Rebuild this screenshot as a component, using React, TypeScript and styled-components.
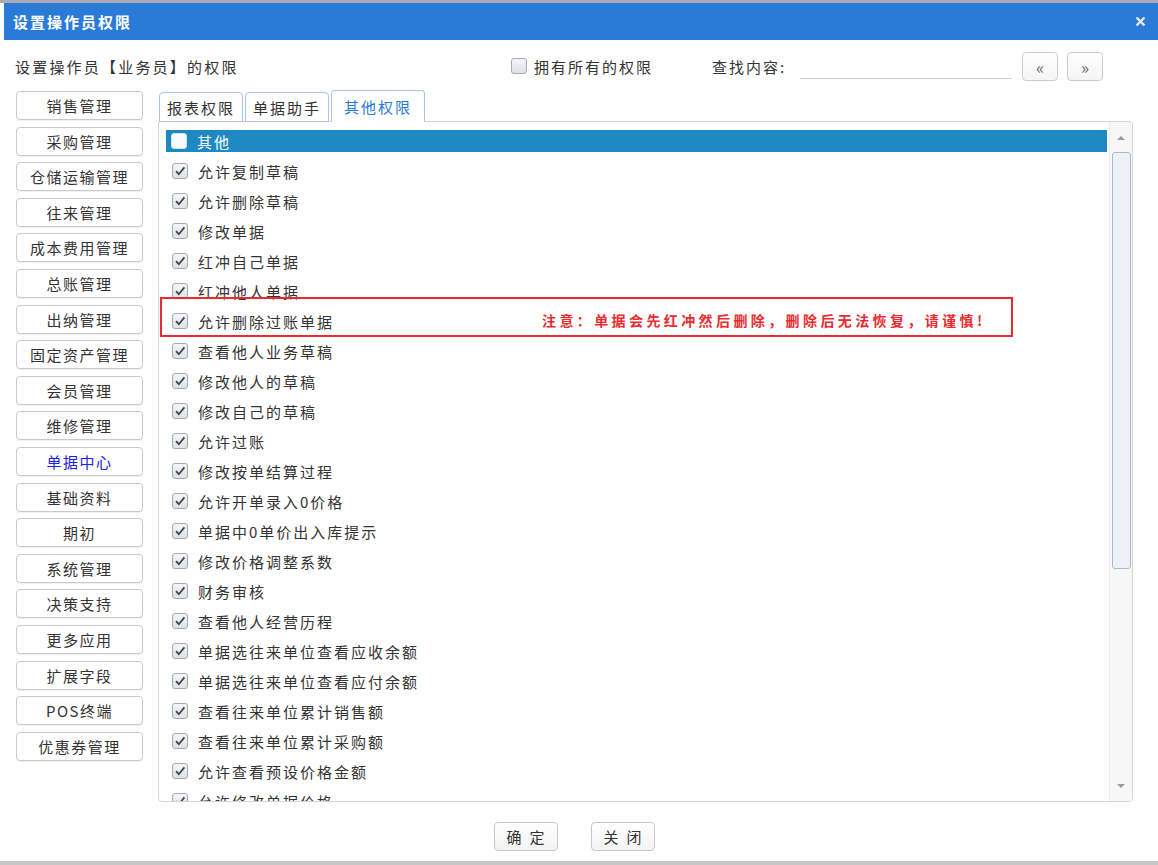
import styled, { createGlobalStyle } from 'styled-components';

const GlobalStyle = createGlobalStyle`
  html, body {
    margin: 0;
    padding: 0;
    background: #ffffff;
  }
  body {
    font-family: 'Noto Sans CJK SC', 'Noto Sans', sans-serif;
    color: #333333;
  }
`;

const modules = [
  '销售管理',
  '采购管理',
  '仓储运输管理',
  '往来管理',
  '成本费用管理',
  '总账管理',
  '出纳管理',
  '固定资产管理',
  '会员管理',
  '维修管理',
  '单据中心',
  '基础资料',
  '期初',
  '系统管理',
  '决策支持',
  '更多应用',
  '扩展字段',
  'POS终端',
  '优惠券管理',
];

const permissions = [
  '允许复制草稿',
  '允许删除草稿',
  '修改单据',
  '红冲自己单据',
  '红冲他人单据',
  '允许删除过账单据',
  '查看他人业务草稿',
  '修改他人的草稿',
  '修改自己的草稿',
  '允许过账',
  '修改按单结算过程',
  '允许开单录入0价格',
  '单据中0单价出入库提示',
  '修改价格调整系数',
  '财务审核',
  '查看他人经营历程',
  '单据选往来单位查看应收余额',
  '单据选往来单位查看应付余额',
  '查看往来单位累计销售额',
  '查看往来单位累计采购额',
  '允许查看预设价格金额',
  '允许修改单据价格',
];

const TopStrip = styled.div`
  height: 3px;
  background: #a9adb3;
`;

const Dialog = styled.div`
  margin-left: 4px;
  display: flex;
  flex-direction: column;
  height: 858px;
`;

const TitleBar = styled.div`
  height: 37px;
  background: #2a7bd8;
  display: flex;
  align-items: center;
  justify-content: space-between;
  padding: 0 12px 0 9px;
`;

const Title = styled.div`
  color: #ffffff;
  font-size: 15px;
  font-weight: bold;
  letter-spacing: 2px;
`;

const CloseButton = styled.div`
  width: 12px;
  height: 12px;
  display: flex;
  align-items: center;
  justify-content: center;
`;

const Toolbar = styled.div`
  height: 48px;
  display: flex;
  align-items: center;
  padding: 2px 0 0 11px;
`;

const Caption = styled.div`
  font-size: 15px;
  letter-spacing: 2.2px;
  color: #333333;
  width: 496px;
`;

const AllLabel = styled.label`
  display: flex;
  align-items: center;
  gap: 7px;
  font-size: 15px;
  letter-spacing: 2px;
  color: #333333;
  width: 201px;
`;

const SearchLabel = styled.span`
  font-size: 15px;
  letter-spacing: 2px;
  color: #333333;
  width: 88px;
`;

const SearchInput = styled.div`
  width: 212px;
  height: 24px;
  border-bottom: 1px solid #cfcfcf;
  margin-right: 10px;
`;

const NavButton = styled.div`
  width: 34px;
  height: 27px;
  border: 1px solid #cccccc;
  border-radius: 4px;
  background: linear-gradient(#ffffff, #f4f4f4);
  display: flex;
  align-items: center;
  justify-content: center;
  font-size: 17px;
  color: #666666;
  margin-right: 9px;
`;

const Main = styled.div`
  display: flex;
  gap: 15px;
  padding-left: 12px;
  height: 712px;
`;

const ModuleList = styled.div`
  width: 127px;
  display: flex;
  flex-direction: column;
  gap: 6.6px;
  padding-top: 1px;
`;

const ModuleButton = styled.div<{ $active?: boolean }>`
  height: 27px;
  border: 1px solid #c9c9c9;
  border-radius: 4px;
  background: #ffffff;
  box-shadow: 0 1px 1px rgba(0, 0, 0, 0.06);
  display: flex;
  align-items: center;
  justify-content: center;
  font-size: 15px;
  letter-spacing: 1.5px;
  color: ${(p) => (p.$active ? '#2020ee' : '#333333')};
  white-space: nowrap;
`;

const TabArea = styled.div`
  width: 975px;
  display: flex;
  flex-direction: column;
`;

const Tabs = styled.div`
  display: flex;
  align-items: flex-end;
  height: 32px;
  padding-left: 1px;
  gap: 2px;
  position: relative;
  z-index: 1;
  margin-bottom: -1px;
`;

const Tab = styled.div<{ $active?: boolean }>`
  height: ${(p) => (p.$active ? '32px' : '30px')};
  box-sizing: border-box;
  padding: 0 ${(p) => (p.$active ? '12px' : '7px')};
  border: 1px solid #a9c5df;
  border-bottom: ${(p) => (p.$active ? '1px solid #ffffff' : '1px solid #a9c5df')};
  border-radius: 4px 4px 0 0;
  background: #ffffff;
  display: flex;
  align-items: center;
  font-size: 15px;
  letter-spacing: 2px;
  color: ${(p) => (p.$active ? '#2a7bd8' : '#333333')};
`;

const Panel = styled.div`
  flex: 1;
  border: 1px solid #d5d5d5;
  border-radius: 0 4px 4px 4px;
  display: flex;
  overflow: hidden;
`;

const ListArea = styled.div`
  flex: 1;
  padding: 4px 2px 0 7px;
  overflow: hidden;
`;

const HeaderRow = styled.div`
  height: 30px;
  display: flex;
  align-items: center;
`;

const HeaderBand = styled.div`
  flex: 1;
  height: 22px;
  background: #1d88c2;
  display: flex;
  align-items: center;
  padding-left: 5px;
  gap: 10px;
  color: #ffffff;
  font-size: 15px;
  letter-spacing: 2px;
`;

const Row = styled.div`
  height: 30px;
  display: flex;
  align-items: center;
  padding-left: 6px;
  gap: 10px;
  position: relative;
  font-size: 15px;
  letter-spacing: 2px;
  color: #333333;
`;

const Box = styled.span<{ $white?: boolean }>`
  width: 16px;
  height: 16px;
  box-sizing: border-box;
  border: 1px solid ${(p) => (p.$white ? '#d8e2ec' : '#a3aab3')};
  border-radius: 3px;
  background: ${(p) => (p.$white ? '#f7f9fb' : 'linear-gradient(#f4f6f8, #dde2e8)')};
  display: inline-flex;
  align-items: center;
  justify-content: center;
  flex-shrink: 0;
`;

const Warning = styled.div`
  position: absolute;
  top: -9px;
  left: -6px;
  width: 853px;
  height: 40px;
  box-sizing: border-box;
  border: 2px solid #ea2a2f;
  display: flex;
  align-items: center;
  padding: 6px 0 0 380px;
`;

const WarningText = styled.span`
  color: #ea2a2f;
  font-size: 14px;
  font-weight: bold;
  letter-spacing: 3.4px;
  white-space: nowrap;
`;

const Scrollbar = styled.div`
  width: 22px;
  background: #f7f7f7;
  border-left: 1px solid #ececec;
  display: flex;
  flex-direction: column;
  align-items: center;
`;

const Arrow = styled.div`
  height: 30px;
  display: flex;
  align-items: center;
  justify-content: center;
`;

const Thumb = styled.div`
  width: 19px;
  height: 417px;
  box-sizing: border-box;
  border: 1px solid #a8b8d8;
  border-radius: 3px;
  background: #eef1f6;
`;

const ScrollTrack = styled.div`
  flex: 1;
`;

const Footer = styled.div`
  flex: 1;
  display: flex;
  align-items: center;
  justify-content: center;
  gap: 33px;
  padding: 10px 14px 0 0;
`;

const FooterButton = styled.div`
  width: 64px;
  height: 29px;
  box-sizing: border-box;
  border: 1px solid #c7c7c7;
  border-radius: 4px;
  background: linear-gradient(#ffffff, #f3f3f3);
  display: flex;
  align-items: center;
  justify-content: center;
  font-size: 15px;
  letter-spacing: 8px;
  padding-left: 8px;
  color: #333333;
`;

const BottomLine = styled.div`
  height: 4px;
  background: #c6c6c6;
`;

const Check = () => (
  <svg width="12" height="12" viewBox="0 0 12 12">
    <path d="M2 6.2 L4.8 9.2 L10.4 2.4" fill="none" stroke="#3c4148" strokeWidth="1.7" />
  </svg>
);

const App = () => {
  return (
    <>
      <GlobalStyle />
      <TopStrip />
      <Dialog>
        <TitleBar>
          <Title>设置操作员权限</Title>
          <CloseButton>
            <svg width="11" height="11" viewBox="0 0 11 11">
              <path d="M1.5 1.5 L9.5 9.5 M9.5 1.5 L1.5 9.5" stroke="#e3e9f3" strokeWidth="2.4" />
            </svg>
          </CloseButton>
        </TitleBar>
        <Toolbar>
          <Caption>设置操作员【业务员】的权限</Caption>
          <AllLabel>
            <Box />
            拥有所有的权限
          </AllLabel>
          <SearchLabel>查找内容:</SearchLabel>
          <SearchInput />
          <NavButton>«</NavButton>
          <NavButton>»</NavButton>
        </Toolbar>
        <Main>
          <ModuleList>
            {modules.map((m) => (
              <ModuleButton key={m} $active={m === '单据中心'}>
                {m}
              </ModuleButton>
            ))}
          </ModuleList>
          <TabArea>
            <Tabs>
              <Tab>报表权限</Tab>
              <Tab>单据助手</Tab>
              <Tab $active>其他权限</Tab>
            </Tabs>
            <Panel>
              <ListArea>
                <HeaderRow>
                  <HeaderBand>
                    <Box $white />
                    其他
                  </HeaderBand>
                </HeaderRow>
                {permissions.map((p) => (
                  <Row key={p}>
                    <Box>
                      <Check />
                    </Box>
                    {p}
                    {p === '允许删除过账单据' && (
                      <Warning>
                        <WarningText>注意：单据会先红冲然后删除，删除后无法恢复，请谨慎!</WarningText>
                      </Warning>
                    )}
                  </Row>
                ))}
              </ListArea>
              <Scrollbar>
                <Arrow>
                  <svg width="8" height="5" viewBox="0 0 8 5">
                    <path d="M0 5 L4 1 L8 5 Z" fill="#9a9a9a" />
                  </svg>
                </Arrow>
                <Thumb />
                <ScrollTrack />
                <Arrow>
                  <svg width="8" height="5" viewBox="0 0 8 5">
                    <path d="M0 0 L4 4 L8 0 Z" fill="#9a9a9a" />
                  </svg>
                </Arrow>
              </Scrollbar>
            </Panel>
          </TabArea>
        </Main>
        <Footer>
          <FooterButton>确定</FooterButton>
          <FooterButton>关闭</FooterButton>
        </Footer>
      </Dialog>
      <BottomLine />
    </>
  );
};

export default App;
